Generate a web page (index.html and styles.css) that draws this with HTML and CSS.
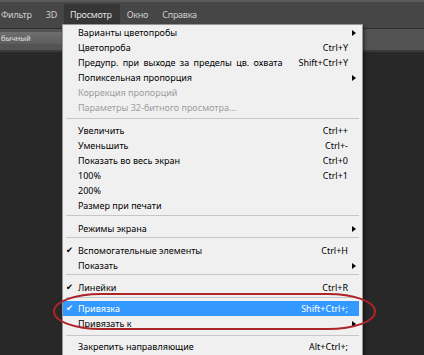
FILE: index.html
```html
<!DOCTYPE html>
<html lang="ru">
<head>
    <meta charset="UTF-8">
    <meta name="viewport" content="width=device-width, initial-scale=1.0">
    <title>Просмотр</title>
    <link rel="stylesheet" href="styles.css">
</head>
<body>
    <div class="menubar">
        <span class="menubar-item">Фильтр</span>
        <span class="menubar-item">3D</span>
        <span class="menubar-item active">Просмотр</span>
        <span class="menubar-item">Окно</span>
        <span class="menubar-item">Справка</span>
    </div>
    <div class="options">
        <div class="mode-field">бычный</div>
    </div>
    <div class="workspace"></div>

    <div class="dropdown">
        <div class="item"><span class="check"></span><span class="label">Варианты цветопробы</span><span class="key"></span><span class="sub"></span></div>
        <div class="item"><span class="check"></span><span class="label">Цветопроба</span><span class="key">Ctrl+Y</span><span></span></div>
        <div class="item"><span class="check"></span><span class="label wide">Предупр. при выходе за пределы цв. охвата</span><span class="key">Shift+Ctrl+Y</span><span></span></div>
        <div class="item"><span class="check"></span><span class="label">Попиксельная пропорция</span><span class="key"></span><span class="sub"></span></div>
        <div class="item disabled"><span class="check"></span><span class="label">Коррекция пропорций</span><span class="key"></span><span></span></div>
        <div class="item disabled"><span class="check"></span><span class="label">Параметры 32-битного просмотра...</span><span class="key"></span><span></span></div>
        <div class="sep sep-a"></div>
        <div class="item"><span class="check"></span><span class="label">Увеличить</span><span class="key">Ctrl++</span><span></span></div>
        <div class="item"><span class="check"></span><span class="label">Уменьшить</span><span class="key">Ctrl+-</span><span></span></div>
        <div class="item"><span class="check"></span><span class="label">Показать во весь экран</span><span class="key">Ctrl+0</span><span></span></div>
        <div class="item"><span class="check"></span><span class="label">100%</span><span class="key">Ctrl+1</span><span></span></div>
        <div class="item"><span class="check"></span><span class="label">200%</span><span class="key"></span><span></span></div>
        <div class="item"><span class="check"></span><span class="label">Размер при печати</span><span class="key"></span><span></span></div>
        <div class="sep"></div>
        <div class="item"><span class="check"></span><span class="label">Режимы экрана</span><span class="key"></span><span class="sub"></span></div>
        <div class="sep sep-tight"></div>
        <div class="item"><span class="check">✔</span><span class="label">Вспомогательные элементы</span><span class="key">Ctrl+H</span><span></span></div>
        <div class="item"><span class="check"></span><span class="label">Показать</span><span class="key"></span><span class="sub"></span></div>
        <div class="sep sep-tight"></div>
        <div class="item"><span class="check">✔</span><span class="label">Линейки</span><span class="key">Ctrl+R</span><span></span></div>
        <div class="sep sep-b"></div>
        <div class="item hover"><span class="check">✔</span><span class="label">Привязка</span><span class="key">Shift+Ctrl+;</span><span></span></div>
        <div class="item"><span class="check"></span><span class="label">Привязать к</span><span class="key"></span><span class="sub"></span></div>
        <div class="sep sep-c"></div>
        <div class="item"><span class="check"></span><span class="label">Закрепить направляющие</span><span class="key">Alt+Ctrl+;</span><span></span></div>
    </div>

    <div class="mark"></div>
</body>
</html>
```

FILE: styles.css
```css
body {
    margin: 0;
    height: 355px;
    overflow: hidden;
    background-color: #282828;
    font-family: "Noto Sans", "DejaVu Sans", sans-serif;
}
.menubar {
    height: 26px;
    display: flex;
    align-items: center;
    background-color: #464646;
    border-top: 2px solid #5a5a5a; /* светлая полоска сверху */
    border-bottom: 1px solid #2f2f2f;
}
.menubar-item {
    color: #cfcfcf;
    font-size: 9px;
    letter-spacing: -0.25px;
    padding: 5px 7px 6px;
    line-height: 11px;
}
.menubar-item:first-child {
    margin-left: -6px;
}
.menubar-item.active {
    padding: 5px 8px 6px 6px;
    background-color: #363636;
    color: #e0e0e0;
}
.options {
    height: 18px;
    padding-top: 3px;
    background-color: #535353;
    border-bottom: 2px solid #3a3a3a;
}
.mode-field {
    width: 61px;
    height: 12px;
    line-height: 12px;
    padding-left: 1px;
    font-size: 7.5px;
    color: #e2e2e2;
    background: linear-gradient(#6e6e6e, #5c5c5c);
    border-right: 1px solid #404040;
}
.workspace {
    height: 300px;
    background-color: #282828;
}

/* выпадающее меню */
.dropdown {
    position: absolute;
    left: 62px;
    top: 24px;
    width: 299px;
    height: 340px;
    background-color: #f0f0f0;
    border: 1px solid #979797;
    box-shadow: 2px 2px 3px rgba(0, 0, 0, 0.4);
    color: #000;
    font-size: 9px;
}
.item {
    display: grid;
    grid-template-columns: 13px 1fr auto 11px;
    align-items: center;
    height: 15px;
    margin-right: 3px;
    padding-left: 2px;
}
.item .label.wide {
    word-spacing: 2px;
}
.item .key {
    text-align: right;
}
.check {
    font-family: "DejaVu Sans", sans-serif;
    font-size: 8.5px;
    font-weight: bold;
    line-height: 15px;
    padding-left: 1px;
}
.sub {
    justify-self: center;
    width: 0;
    height: 0;
    margin-left: 1px;
    border-top: 3px solid transparent;
    border-bottom: 3px solid transparent;
    border-left: 4px solid #000;
}
.item.disabled {
    color: #9d9d9d;
}
.item.hover {
    background-color: #3399ff;
    color: #fff;
}
.sep {
    height: 1px;
    margin: 2px 3px 5px;
    background-color: #c6c6c6;
}
.sep.sep-a {
    margin: 3px 3px 4px;
}
.sep.sep-tight {
    margin: 1px 3px 5px;
}
.sep.sep-b {
    margin: 2px 3px 3px;
}
.sep.sep-c {
    margin: 4px 3px 3px;
}

/* красная пометка */
.mark {
    position: absolute;
    left: 53px;
    top: 293px;
    width: 319px;
    height: 33px;
    border: 2px solid #ad2429;
    border-radius: 48px / 18px;
}
```
